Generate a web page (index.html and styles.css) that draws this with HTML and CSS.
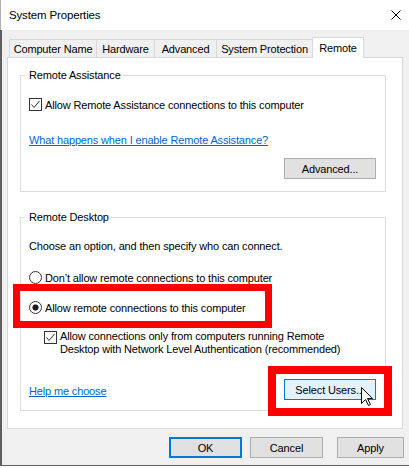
FILE: index.html
```html
<!DOCTYPE html>
<html>
<head>
<meta charset="utf-8">
<link rel="stylesheet" href="styles.css">
</head>
<body>
<div class="window">
  <div class="titlebar">
    <span class="title">System Properties</span>
    <span class="close"><svg width="10" height="10" viewBox="0 0 10 10"><path d="M0.5 0.5 L9.5 9.5 M9.5 0.5 L0.5 9.5" stroke="#000" stroke-width="1" fill="none"/></svg></span>
  </div>
  <div class="body">
    <div class="tabs">
      <div class="tab t-name">Computer Name</div>
      <div class="tab t-hw">Hardware</div>
      <div class="tab t-adv">Advanced</div>
      <div class="tab t-sp">System Protection</div>
      <div class="tab active">Remote</div>
    </div>
    <div class="panel">
      <fieldset class="group g1">
        <legend>Remote Assistance</legend>
        <div class="row check-row">
          <span class="checkbox"><svg width="11" height="11" viewBox="0 0 11 11"><path d="M1.5 5.5 L4 8.5 L9.5 2" stroke="#333" stroke-width="1" fill="none"/></svg></span>
          <span>Allow Remote Assistance connections to this computer</span>
        </div>
        <div class="row link-row"><a class="link">What happens when I enable Remote Assistance?</a></div>
        <div class="row btn-row"><button class="btn btn-wide">Advanced...</button></div>
      </fieldset>
      <fieldset class="group g2">
        <legend>Remote Desktop</legend>
        <div class="row text-row">Choose an option, and then specify who can connect.</div>
        <div class="row radio-row r1"><span class="radio"></span><span>Don’t allow remote connections to this computer</span></div>
        <div class="row radio-row r2"><span class="radio selected"></span><span>Allow remote connections to this computer</span></div>
        <div class="nla-row">
          <span class="checkbox"><svg width="11" height="11" viewBox="0 0 11 11"><path d="M1.5 5.5 L4 8.5 L9.5 2" stroke="#333" stroke-width="1" fill="none"/></svg></span>
          <span class="nla-text">Allow connections only from computers running Remote<br>Desktop with Network Level Authentication (recommended)</span>
        </div>
        <div class="row bottom-row"><a class="link help">Help me choose</a><button class="btn btn-wide btn-hot">Select Users...</button></div>
      </fieldset>
    </div>
    <div class="dialog-buttons">
      <button class="btn btn-default">OK</button>
      <button class="btn">Cancel</button>
      <button class="btn btn-apply">Apply</button>
    </div>
  </div>
  <div class="annot a1"></div>
  <div class="annot a2"></div>
  <svg class="cursor" width="13" height="20" viewBox="0 0 13 20"><path d="M0.5 0.5 V16.5 L4.5 12.5 L7.5 18.5 L9.5 17.5 L6.5 11.5 H11.5 Z" fill="#fff" stroke="#000" stroke-width="1" stroke-linejoin="miter"/></svg>
</div>
</body>
</html>
```
FILE: styles.css
```css
html, body {
  margin: 0;
  padding: 0;
  overflow: hidden;
  background: #fff;
}
body {
  font-family: "Liberation Sans", Arial, sans-serif;
  font-size: 11px;
  letter-spacing: -0.15px;
  color: #000;
}
.window {
  position: relative;
  width: 420px;
}
.titlebar {
  box-sizing: border-box;
  height: 30px;
  background: #fff;
  border-left: 1px solid #b0b0b0;
  padding-left: 8px;
  display: flex;
  align-items: center;
  justify-content: space-between;
}
.title {
  font-size: 11.5px;
}
.close {
  width: 46px;
  height: 30px;
  margin-right: 1px;
  display: flex;
  align-items: center;
  justify-content: center;
}
.close svg { display: block; }
.body {
  background: #f0f0f0;
  border-left: 2px solid #5f5f5f;
  border-bottom: 1px solid #5f5f5f;
  padding: 7px 17px 7px 5px;
}
.tabs {
  display: flex;
  align-items: flex-end;
  height: 20px;
  margin-left: 2px;
}
.tab {
  box-sizing: border-box;
  height: 18px;
  border: 1px solid #d9d9d9;
  border-right: none;
  border-bottom: none;
  background: #f0f0f0;
  display: flex;
  align-items: center;
  justify-content: center;
  white-space: nowrap;
}
.t-name { width: 87px; }
.t-hw { width: 58px; }
.t-adv { width: 62px; }
.t-sp { width: 96px; }
.tab.active {
  width: 52px;
  height: 21px;
  padding-bottom: 1px;
  border-right: 1px solid #d9d9d9;
  background: #fff;
  margin-bottom: -1px;
  position: relative;
  z-index: 1;
}
.panel {
  background: #fff;
  border: 1px solid #d9d9d9;
  padding: 10px 16px 17px 12px;
}
fieldset.group {
  margin: 0;
  min-width: 0;
  border: 1px solid #dcdcdc;
  padding: 0 9px 12px 8px;
}
legend {
  padding: 0 2px 0 4px;
  margin-left: -4px;
  line-height: 14px;
}
fieldset.g2 {
  margin-top: 18px;
  padding-bottom: 10px;
}
.row {
  display: flex;
  align-items: center;
  height: 15px;
  white-space: nowrap;
}
.checkbox {
  box-sizing: border-box;
  width: 13px;
  height: 13px;
  border: 1px solid #333;
  background: #fff;
  margin-right: 3px;
  flex: none;
  display: block;
}
.checkbox svg { display: block; }
.check-row { margin-top: 15px; }
.link-row { margin-top: 20px; }
.link {
  color: #0066cc;
  text-decoration: underline;
}
.btn-row {
  margin-top: 11px;
  height: 21px;
  justify-content: flex-end;
}
.btn {
  box-sizing: border-box;
  height: 21px;
  width: 73px;
  padding: 0;
  background: #e1e1e1;
  border: 1px solid #adadad;
  font: inherit;
  letter-spacing: inherit;
  color: #000;
}
.btn-wide { width: 92px; }
.btn-hot {
  background: #e5f1fb;
  border-color: #0078d7;
}
.btn-default {
  border: 2px solid #0078d7;
}
.btn-apply {
  width: 67px;
  margin-left: 6px;
}
.text-row { margin-top: 14px; }
.r1 { margin-top: 17px; }
.r2 { margin-top: 15px; }
.radio {
  box-sizing: border-box;
  width: 13px;
  height: 13px;
  border: 1px solid #333;
  border-radius: 50%;
  background: #fff;
  margin-right: 3px;
  flex: none;
}
.radio.selected {
  background: radial-gradient(circle, #1a1a1a 0, #1a1a1a 2.7px, #fff 3.4px);
}
.nla-row {
  display: flex;
  align-items: flex-start;
  margin-top: 15px;
  margin-left: 15px;
  line-height: 13px;
  white-space: nowrap;
}
.nla-row .checkbox { margin-top: 1px; }
.bottom-row {
  margin-top: 23px;
  height: 21px;
  justify-content: space-between;
}
.help { padding-top: 2px; }
.dialog-buttons {
  display: flex;
  justify-content: flex-end;
  gap: 8px;
  margin-top: 8px;
  margin-right: -1px;
}
.annot {
  position: absolute;
  box-sizing: border-box;
  border: 7px solid #ff0000;
}
.a1 {
  left: 13px;
  top: 284px;
  width: 259px;
  height: 44px;
}
.a2 {
  left: 268px;
  top: 366px;
  width: 124px;
  height: 50px;
  border-width: 8px;
}
.cursor {
  position: absolute;
  left: 361px;
  top: 387px;
}
```
